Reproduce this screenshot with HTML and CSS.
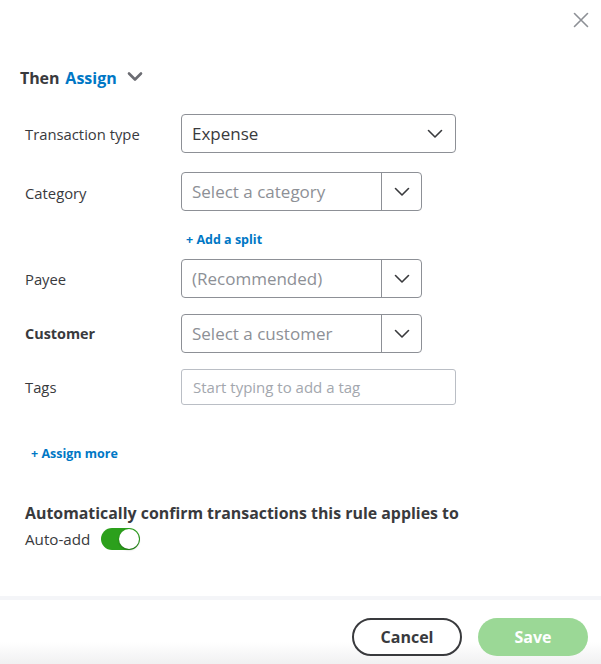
FILE: index.html
```html
<!DOCTYPE html>
<html>
<head>
<meta charset="utf-8">
<link rel="stylesheet" href="styles.css">
</head>
<body>
<div class="dialog">
  <div class="topbar">
    <button class="close" aria-label="Close">
      <svg width="16" height="16" viewBox="0 0 16 16"><path d="M1.5 1.5 L14.5 14.5 M14.5 1.5 L1.5 14.5" stroke="#8d9096" stroke-width="1.6" fill="none" stroke-linecap="round"/></svg>
    </button>
  </div>

  <div class="title">
    <span class="then">Then</span>
    <span class="assign">Assign</span>
    <svg class="title-chev" width="16" height="12" viewBox="0 0 16 12"><path d="M2 2.5 L8 8.5 L14 2.5" stroke="#6b6c72" stroke-width="2.6" fill="none" stroke-linecap="round" stroke-linejoin="round"/></svg>
  </div>

  <div class="form">
    <div class="row r-type">
      <div class="label">Transaction type</div>
      <div class="select wide">
        <span class="value">Expense</span>
        <svg class="chev" width="16" height="10" viewBox="0 0 16 10"><path d="M1.5 1.5 L8 8 L14.5 1.5" stroke="#393a3d" stroke-width="1.6" fill="none" stroke-linecap="round" stroke-linejoin="round"/></svg>
      </div>
    </div>

    <div class="row r-cat">
      <div class="label">Category</div>
      <div class="combo">
        <span class="ph">Select a category</span>
        <span class="btn"><svg width="16" height="10" viewBox="0 0 16 10"><path d="M1.5 1.5 L8 8 L14.5 1.5" stroke="#393a3d" stroke-width="1.6" fill="none" stroke-linecap="round" stroke-linejoin="round"/></svg></span>
      </div>
    </div>

    <div class="row r-split">
      <div class="label"></div>
      <a class="link split">+ Add a split</a>
    </div>

    <div class="row r-payee">
      <div class="label">Payee</div>
      <div class="combo">
        <span class="ph">(Recommended)</span>
        <span class="btn"><svg width="16" height="10" viewBox="0 0 16 10"><path d="M1.5 1.5 L8 8 L14.5 1.5" stroke="#393a3d" stroke-width="1.6" fill="none" stroke-linecap="round" stroke-linejoin="round"/></svg></span>
      </div>
    </div>

    <div class="row r-cust">
      <div class="label bold">Customer</div>
      <div class="combo">
        <span class="ph">Select a customer</span>
        <span class="btn"><svg width="16" height="10" viewBox="0 0 16 10"><path d="M1.5 1.5 L8 8 L14.5 1.5" stroke="#393a3d" stroke-width="1.6" fill="none" stroke-linecap="round" stroke-linejoin="round"/></svg></span>
      </div>
    </div>

    <div class="row r-tags">
      <div class="label">Tags</div>
      <div class="tags">Start typing to add a tag</div>
    </div>
  </div>

  <a class="link more">+ Assign more</a>

  <div class="auto">
    <div class="auto-title">Automatically confirm transactions this rule applies to</div>
    <div class="auto-row">
      <span class="auto-label">Auto-add</span>
      <span class="toggle"><span class="knob"></span></span>
    </div>
  </div>

  <div class="footer">
    <button class="cancel">Cancel</button>
    <button class="save">Save</button>
  </div>
</div>
</body>
</html>
```
FILE: styles.css
```css
* { box-sizing: border-box; }
html, body { margin: 0; padding: 0; background: #fff; }
body {
  font-family: "Open Sans", "Lato", "Liberation Sans", sans-serif;
  color: #393a3d;
  width: 601px;
  height: 664px;
  overflow: hidden;
}
.dialog { width: 601px; height: 664px; display: flex; flex-direction: column; }

.topbar { height: 40px; display: flex; justify-content: flex-end; align-items: center; padding-right: 12px; }
.close { background: none; border: 0; padding: 0; width: 16px; height: 16px; display: flex; }

.title { display: flex; align-items: center; padding-left: 20px; margin-top: 27px; height: 22px; }
.then { font-size: 16px; font-weight: 700; letter-spacing: -0.1px; }
.assign { font-size: 16px; font-weight: 700; color: #0077c5; margin-left: 6px; letter-spacing: 0; }
.title-chev { margin-left: 10px; margin-top: -3px; }

.form { padding-left: 25px; margin-top: 25px; display: flex; flex-direction: column; }
.row { display: flex; align-items: center; }
.label { width: 156px; font-size: 14.8px; }
.label.bold { font-weight: 700; font-size: 14.4px; }
.r-cat { margin-top: 19px; }
.r-cat .label { padding-top: 3px; }
.r-split { height: 48px; }
.r-cust { margin-top: 16px; }
.r-tags { margin-top: 16px; }

.select {
  width: 275px; height: 39px; border: 1px solid #8d9096; border-radius: 4px;
  display: flex; align-items: center; justify-content: space-between;
  padding: 0 12px 0 10px;
}
.value { font-size: 17px; color: #393a3d; }
.chev { margin-top: 1px; }

.combo {
  width: 241px; height: 39px; border: 1px solid #8d9096; border-radius: 4px;
  display: flex; align-items: center;
}
.ph { flex: 1; font-size: 17px; color: #8d9096; padding-left: 10px; white-space: nowrap; }
.btn { width: 40px; height: 100%; border-left: 1px solid #8d9096; display: flex; align-items: center; justify-content: center; }

.link { color: #0077c5; font-weight: 700; font-size: 12.5px; text-decoration: none; }
.split { margin-left: 5px; margin-top: 9px; }

.tags {
  width: 275px; height: 36px; border: 1px solid #babec5; border-radius: 3px;
  display: flex; align-items: center; padding-left: 11px;
  font-size: 15px; color: #a3a7ae;
}

.more { margin-left: 31px; margin-top: 41px; display: block; height: 16px; line-height: 16px; }

.auto { padding-left: 25px; margin-top: 40px; }
.auto-title { font-size: 15.9px; font-weight: 700; line-height: 22px; }
.auto-row { display: flex; align-items: center; margin-top: 4px; }
.auto-label { font-size: 15.2px; }
.toggle {
  margin-left: 11px; width: 39px; height: 22px; border-radius: 11px; background: #2ca01c;
  display: flex; justify-content: flex-end; align-items: center; padding-right: 1px;
}
.knob { width: 20px; height: 20px; border-radius: 50%; background: #fff; box-shadow: 0 1px 2px rgba(0,0,0,0.35); }

.footer {
  margin-top: auto; height: 68px; border-top: 4px solid #f4f5f8;
  display: flex; justify-content: flex-end; align-items: flex-start; gap: 16px;
  padding: 18px 13px 0 0;
  background: linear-gradient(to bottom, #fff 0, #fff 42px, #eeeeef 68px);
}
.cancel, .save {
  width: 110px; height: 38px; border-radius: 19px; font-family: inherit;
  font-size: 16px; font-weight: 700;
}
.cancel { background: #fff; border: 2px solid #393a3d; color: #393a3d; }
.save { background: #9bd896; border: 0; color: #fff; }
```
